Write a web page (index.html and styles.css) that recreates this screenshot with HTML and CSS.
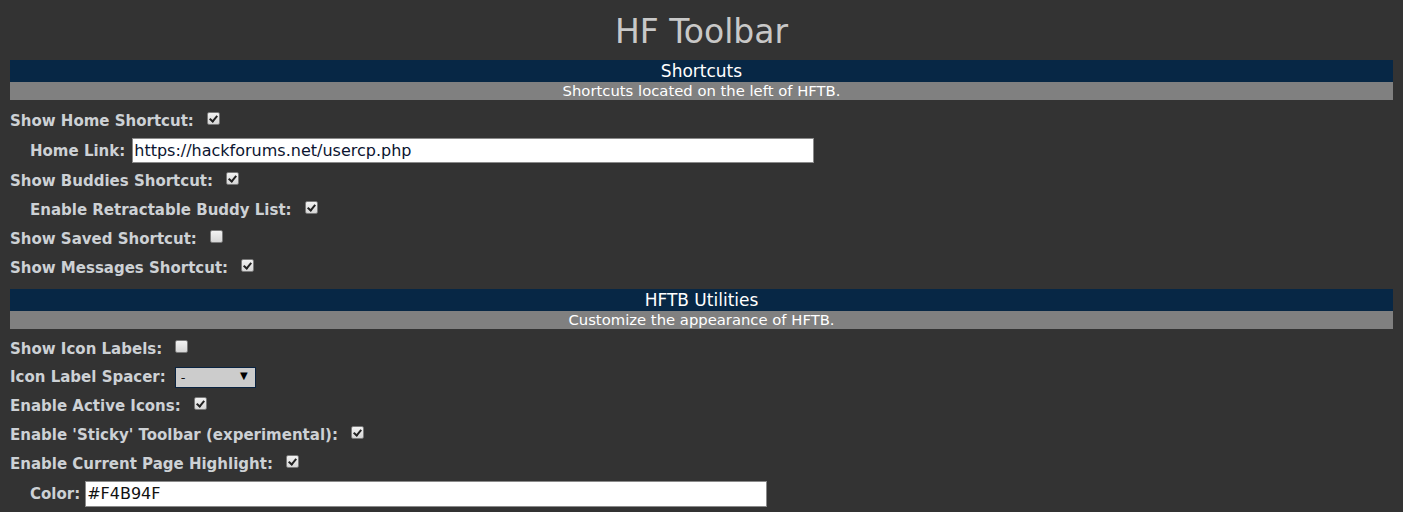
FILE: index.html
```html
<!DOCTYPE html>
<html>
<head>
<meta charset="utf-8">
<title>HF Toolbar</title>
<link rel="stylesheet" href="styles.css">
</head>
<body>
<div class="page">
  <h1 class="title">HF Toolbar</h1>

  <section class="section">
    <div class="sec-head">Shortcuts</div>
    <div class="sec-sub">Shortcuts located on the left of HFTB.</div>
    <div class="rows">
      <div class="row"><span class="label">Show Home Shortcut:</span><input type="checkbox" class="cb" checked></div>
      <div class="row row-input indent"><span class="label">Home Link:</span><input type="text" class="text" value="https://hackforums.net/usercp.php"></div>
      <div class="row"><span class="label">Show Buddies Shortcut:</span><input type="checkbox" class="cb" checked></div>
      <div class="row indent"><span class="label">Enable Retractable Buddy List:</span><input type="checkbox" class="cb" checked></div>
      <div class="row"><span class="label">Show Saved Shortcut:</span><input type="checkbox" class="cb"></div>
      <div class="row"><span class="label">Show Messages Shortcut:</span><input type="checkbox" class="cb" checked></div>
    </div>
  </section>

  <section class="section">
    <div class="sec-head">HFTB Utilities</div>
    <div class="sec-sub">Customize the appearance of HFTB.</div>
    <div class="rows">
      <div class="row row-short"><span class="label">Show Icon Labels:</span><input type="checkbox" class="cb"></div>
      <div class="row row-short"><span class="label">Icon Label Spacer:</span><span class="select-wrap"><select class="select"><option>-</option><option>|</option><option>•</option></select><span class="arrow">▼</span></span></div>
      <div class="row"><span class="label">Enable Active Icons:</span><input type="checkbox" class="cb" checked></div>
      <div class="row"><span class="label">Enable 'Sticky' Toolbar (experimental):</span><input type="checkbox" class="cb" checked></div>
      <div class="row"><span class="label">Enable Current Page Highlight:</span><input type="checkbox" class="cb" checked></div>
      <div class="row row-input indent"><span class="label">Color:</span><input type="text" class="text text-color" value="#F4B94F"></div>
    </div>
  </section>
</div>
</body>
</html>
```

FILE: styles.css
```css
html, body {
  margin: 0;
  padding: 0;
  background: #333333;
}

body {
  font-family: "DejaVu Sans", Verdana, sans-serif;
  color: #cccccc;
  overflow: hidden;
}

.page {
  padding: 0 10px;
}

.title {
  margin: 12px 0 9px;
  font-size: 33px;
  font-weight: normal;
  line-height: 39px;
  text-align: center;
  color: #c8c8c8;
}

.section {
  margin-bottom: 7px;
}

.sec-head {
  height: 22px;
  line-height: 22px;
  background: #072745;
  color: #ffffff;
  font-size: 17px;
  text-align: center;
}

.sec-sub {
  height: 18px;
  line-height: 17px;
  background: #808080;
  color: #ffffff;
  font-size: 14.8px;
  text-align: center;
}

.rows {
  display: flex;
  flex-direction: column;
  padding-top: 6px;
}

.row {
  display: flex;
  align-items: center;
  height: 29px;
}

.row-short {
  height: 28px;
}

.row-input {
  height: 31px;
}

.indent {
  padding-left: 20px;
}

.label {
  font-size: 15px;
  font-weight: bold;
  color: #cdd1d5;
  white-space: nowrap;
}

.cb {
  appearance: none;
  -webkit-appearance: none;
  width: 13px;
  height: 13px;
  margin: 0 0 5px 13px;
  box-sizing: border-box;
  border: 1px solid #7a7a7a;
  border-radius: 2px;
  background: linear-gradient(#f2f2f2, #d6d6d6);
  position: relative;
  flex: none;
}

.cb:checked::after {
  content: "";
  position: absolute;
  left: 3px;
  top: 1px;
  width: 3px;
  height: 6px;
  border: solid #222;
  border-width: 0 2px 2px 0;
  transform: rotate(40deg);
}

.text {
  margin: 0 0 0 7px;
  width: 682px;
  height: 25px;
  box-sizing: border-box;
  border: 1px solid #8a8a8a;
  background: #ffffff;
  padding: 0 1px;
  font-family: "DejaVu Sans", Verdana, sans-serif;
  font-size: 16px;
  color: #0b1430;
  outline: none;
}

.text-color {
  height: 26px;
  margin-left: 5px;
  color: #111;
}

.select-wrap {
  position: relative;
  margin-left: 9px;
  display: inline-block;
}

.select {
  appearance: none;
  -webkit-appearance: none;
  width: 81px;
  height: 21px;
  box-sizing: border-box;
  border: 1px solid #0a2340;
  border-radius: 0;
  background: #cccccc;
  padding: 0 0 0 5px;
  font-family: "DejaVu Sans", Verdana, sans-serif;
  font-size: 13px;
  color: #111;
  display: block;
}

.arrow {
  position: absolute;
  right: 8px;
  top: 3px;
  font-size: 10px;
  color: #000;
  pointer-events: none;
}
```
